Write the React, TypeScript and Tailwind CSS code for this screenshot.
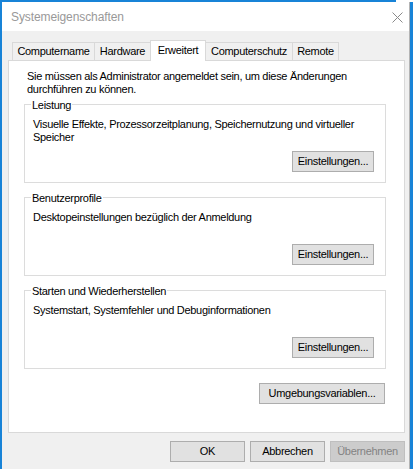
export default function App() {
  const groupBtn =
    "mt-auto self-end mr-[11px] mb-[10px] w-[82px] h-[21px] flex items-center justify-center bg-[#e1e1e1] border border-[#adadad]";
  const dlgBtn =
    "w-[75px] h-[21px] flex items-center justify-center bg-[#e1e1e1] border border-[#adadad]";
  return (
    <div className="w-[413px] h-[469px] bg-white flex flex-col font-['Liberation_Sans',Arial,sans-serif] text-[11px] leading-[13px] tracking-[-0.3px] text-black overflow-hidden">
      <div className="flex h-[2px] shrink-0">
        <div className="w-[396px] bg-[#1883d7]" />
        <div className="flex-1 bg-white" />
      </div>
      <div className="flex flex-1">
        <div className="w-[2px] bg-[#1883d7]" />
        <div className="w-[407px] flex flex-col bg-[#f0f0f0]">
          {/* title bar */}
          <div className="h-[29px] bg-white flex items-center justify-between pl-[9px] pr-[6px] pt-[1px]">
            <span className="text-[12px] leading-[15px] tracking-[-0.1px] text-[#999999]">Systemeigenschaften</span>
            <svg width="11" height="11" viewBox="0 0 11 11" className="mt-[1px]">
              <path d="M0.5 0.5 L10.5 10.5 M10.5 0.5 L0.5 10.5" stroke="#8a8a8a" strokeWidth="1" fill="none" />
            </svg>
          </div>
          {/* tabs */}
          <div className="flex items-end pt-[9px] pl-[10px] h-[29px]">
            <div className="w-[83px] h-[18px] border border-b-0 border-[#d9d9d9] flex items-center justify-center">Computername</div>
            <div className="-ml-px w-[57px] h-[18px] border border-b-0 border-[#d9d9d9] flex items-center justify-center">Hardware</div>
            <div className="-ml-px w-[56px] h-[21px] -mb-px relative z-10 bg-white border border-b-0 border-[#d9d9d9] flex items-start justify-center pt-[3px]">Erweitert</div>
            <div className="-ml-px w-[88px] h-[18px] border border-b-0 border-[#d9d9d9] flex items-center justify-center">Computerschutz</div>
            <div className="-ml-px w-[47px] h-[18px] border border-b-0 border-[#d9d9d9] flex items-center justify-center">Remote</div>
          </div>
          {/* panel */}
          <div className="ml-[6px] w-[397px] h-[373px] bg-white border border-[#d9d9d9] flex flex-col">
            <p className="mt-[9px] pl-[18px]">
              Sie müssen als Administrator angemeldet sein, um diese Änderungen
              <br />
              durchführen zu können.
            </p>
            <div className="mt-[8px] ml-[15px] w-[362px] h-[79px] border border-[#dcdcdc] flex flex-col">
              <div className="-mt-[6px] ml-[6px] px-[1px] bg-white w-fit">Leistung</div>
              <p className="mt-[6px] pl-[8px]">
                Visuelle Effekte, Prozessorzeitplanung, Speichernutzung und virtueller
                <br />
                Speicher
              </p>
              <div className={groupBtn}>Einstellungen...</div>
            </div>
            <div className="mt-[14px] ml-[15px] w-[362px] h-[79px] border border-[#dcdcdc] flex flex-col">
              <div className="-mt-[6px] ml-[6px] px-[1px] bg-white w-fit">Benutzerprofile</div>
              <p className="mt-[6px] pl-[8px]">Desktopeinstellungen bezüglich der Anmeldung</p>
              <div className={groupBtn}>Einstellungen...</div>
            </div>
            <div className="mt-[14px] ml-[15px] w-[362px] h-[79px] border border-[#dcdcdc] flex flex-col">
              <div className="-mt-[6px] ml-[6px] px-[1px] bg-white w-fit">Starten und Wiederherstellen</div>
              <p className="mt-[6px] pl-[8px]">Systemstart, Systemfehler und Debuginformationen</p>
              <div className={groupBtn}>Einstellungen...</div>
            </div>
            <div className="mt-[14px] self-end mr-[19px] w-[126px] h-[21px] flex items-center justify-center bg-[#e1e1e1] border border-[#adadad]">
              Umgebungsvariablen...
            </div>
          </div>
          {/* dialog buttons */}
          <div className="mt-[8px] flex justify-end gap-[5px] mr-[4px]">
            <div className={dlgBtn}>OK</div>
            <div className={dlgBtn}>Abbrechen</div>
            <div className="w-[75px] h-[21px] flex items-center justify-center bg-[#cccccc] border border-[#bfbfbf] text-[#838383]">
              Übernehmen
            </div>
          </div>
        </div>
        <div className="w-px bg-[#b4b4b4]" />
        <div className="flex-1 bg-[#1883d7]" />
      </div>
    </div>
  );
}
